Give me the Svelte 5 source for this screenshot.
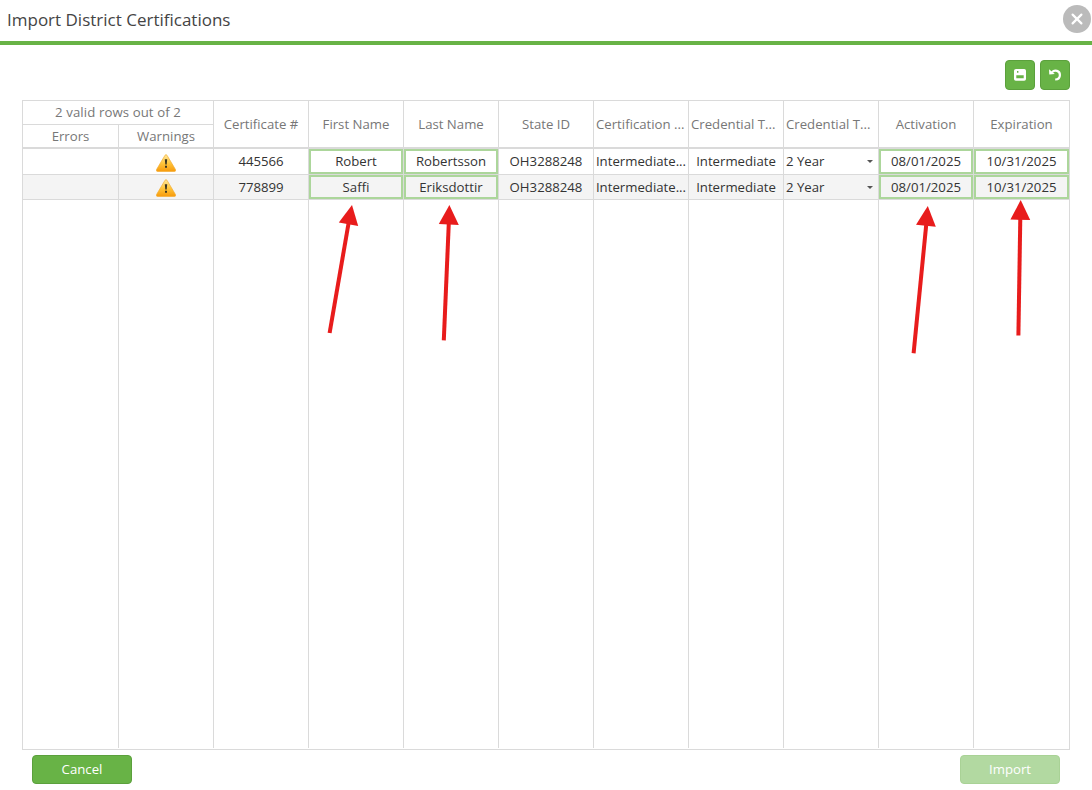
<script lang="ts">
	const columns = [
		'Certificate #',
		'First Name',
		'Last Name',
		'State ID',
		'Certification ...',
		'Credential T...',
		'Credential T...',
		'Activation',
		'Expiration'
	];

	const rows = [
		['445566', 'Robert', 'Robertsson', 'OH3288248', 'Intermediate...', 'Intermediate', '2 Year', '08/01/2025', '10/31/2025'],
		['778899', 'Saffi', 'Eriksdottir', 'OH3288248', 'Intermediate...', 'Intermediate', '2 Year', '08/01/2025', '10/31/2025']
	];

	const edited = [1, 2, 7, 8];
	const select = 6;

	// each arrow: tail, neck and the three corners of the head
	const arrows = [
		{ line: [329.6, 333, 348.6, 223], head: '352,205 338.8,222.5 358.2,226' },
		{ line: [443.8, 340.3, 448.8, 223], head: '449.4,205 438.8,224 458.8,225' },
		{ line: [913.6, 353.3, 926.2, 225], head: '927.8,206 916,224.8 935.8,226.8' },
		{ line: [1018.4, 335.5, 1020.3, 218], head: '1020.7,200 1010.4,219.6 1030.2,220' }
	];
</script>

<div class="dialog">
	<header>
		<h1>Import District Certifications</h1>
		<button class="close" aria-label="Close">
			<svg width="28" height="28" viewBox="0 0 28 28">
				<path d="M9.6 9.6l8.8 8.8M18.4 9.6l-8.8 8.8" stroke="#fff" stroke-width="2.2" stroke-linecap="round" />
			</svg>
		</button>
	</header>

	<div class="toolbar">
		<button class="tool" aria-label="Save">
			<svg width="28" height="28" viewBox="0 0 28 28">
				<path fill="#fff" fill-rule="evenodd" d="M10 8h8.2q1.8 0 1.8 1.8v8.2q0 1.8-1.8 1.8H9.8Q8 19.8 8 18V9.8Q8 8 10 8zM10.3 14.3v3h7.4v-3zM11 10v1.8h1.4v-1.8z" />
			</svg>
		</button>
		<button class="tool" aria-label="Undo">
			<svg width="28" height="28" viewBox="0 0 28 28">
				<path d="M11 11.2C13.6 8.4 18.9 9.6 18.9 14c0 2.7-1.9 4.5-4.7 4.5" fill="none" stroke="#fff" stroke-width="2.2" />
				<path d="M8 8.2l.3 5.3 5.5-.5z" fill="#fff" />
			</svg>
		</button>
	</div>

	<div class="grid">
		<div class="row head">
			<div class="group">
				<div class="summary">2 valid rows out of 2</div>
				<div class="pair">
					<div class="cell first">Errors</div>
					<div class="cell">Warnings</div>
				</div>
			</div>
			{#each columns as column}
				<div class="cell" class:cut={column.endsWith('...')}>{column}</div>
			{/each}
		</div>
		{#each rows as row, r}
			<div class="row data" class:alt={r % 2 == 1}>
				<div class="cell first"></div>
				<div class="cell">
					<svg class="warning" width="20" height="18" viewBox="0 0 20 18">
						<defs>
							<linearGradient id="amber{r}" x1="0" y1="0" x2="0" y2="1">
								<stop offset="0" stop-color="#ffe9a0" />
								<stop offset=".5" stop-color="#ffc63c" />
								<stop offset="1" stop-color="#f79a0c" />
							</linearGradient>
						</defs>
						<path d="M9 1.3Q10 -.1 11 1.3L19.5 15.6Q20 17.4 18.5 17.5H1.5Q0 17.4 .5 15.6z" fill="url(#amber{r})" stroke="#f4ae35" stroke-width=".7" />
						<path d="M8.8 5.2h2.4l-.5 5.3H9.3zM9 11.8h2v2H9z" fill="#3b3520" />
					</svg>
				</div>
				{#each row as value, i}
					<div class="cell" class:edited={edited.includes(i)} class:select={i == select}>
						<span>{value}</span>
						{#if i == select}<i class="caret"></i>{/if}
					</div>
				{/each}
			</div>
		{/each}
		<div class="row filler">
			<div class="cell first"></div>
			{#each Array(10) as _}
				<div class="cell"></div>
			{/each}
		</div>
	</div>

	<footer>
		<button class="action">Cancel</button>
		<button class="action" disabled>Import</button>
	</footer>

	<svg class="arrows" width="1092" height="790">
		{#each arrows as { line, head }}
			<line x1={line[0]} y1={line[1]} x2={line[2]} y2={line[3]} />
			<polygon points={head} />
		{/each}
	</svg>
</div>

<style>
	.dialog {
		position: relative;
		display: flex;
		flex-direction: column;
		width: 1092px;
		height: 790px;
		overflow: hidden;
		background: #fff;
		font-family: "Open Sans", "Noto Sans", sans-serif;
		font-size: 13.2px;
		color: #333;
	}
	header {
		display: flex;
		justify-content: space-between;
		box-sizing: border-box;
		height: 45px;
		padding: 5px 1px 0 7px;
		border-bottom: 4px solid #68b346;
	}
	h1 {
		margin: 0;
		font-size: 17px;
		font-weight: 400;
		line-height: 30px;
		color: #444;
		white-space: nowrap;
	}
	button {
		box-sizing: border-box;
		padding: 0;
		border: 0;
		font-family: inherit;
	}
	button svg {
		display: block;
	}
	.close {
		width: 28px;
		height: 28px;
		border-radius: 50%;
		background: #bbb;
	}
	.toolbar {
		display: flex;
		justify-content: flex-end;
		gap: 5px;
		padding: 15px 22px 10px 0;
	}
	.tool {
		width: 30px;
		height: 30px;
		border: 1px solid #5ba03c;
		border-radius: 4px;
		background: #68b346;
	}
	.grid {
		display: flex;
		flex-direction: column;
		box-sizing: border-box;
		width: 1048px;
		height: 650px;
		margin-left: 22px;
		padding-bottom: 1px;
		border: 1px solid #dadada;
	}
	.row {
		display: flex;
	}
	.head {
		height: 46px;
		border-bottom: 2px solid #dadada;
		color: #777;
	}
	.group {
		width: 191px;
	}
	.summary {
		height: 23px;
		border-right: 1px solid #dadada;
		border-bottom: 1px solid #dadada;
		line-height: 23px;
		text-align: center;
		letter-spacing: 0.1px;
	}
	.pair {
		display: flex;
		height: 22px;
	}
	.cell {
		display: flex;
		align-items: center;
		justify-content: center;
		box-sizing: border-box;
		width: 95px;
		border-right: 1px solid #dadada;
		white-space: nowrap;
	}
	.cell.first {
		width: 96px;
	}
	.cell.cut {
		justify-content: flex-start;
		padding-left: 2px;
	}
	.row > .cell:last-child {
		border-right: 0;
	}
	.data {
		height: 25px;
		border-bottom: 1px solid #dadada;
		line-height: 18px;
	}
	.data span {
		margin-bottom: 1px;
	}
	.data.alt {
		height: 24px;
		background: #f4f4f4;
	}
	.data.alt span {
		margin-bottom: 0;
	}
	.edited {
		position: relative;
	}
	.edited::after {
		content: "";
		position: absolute;
		inset: 0;
		border: 2px solid #acd69b;
	}
	.select {
		justify-content: space-between;
		padding: 0 5px 0 2px;
	}
	.caret {
		border: 3px solid transparent;
		border-top-color: #555;
		border-bottom: 0;
	}
	.warning {
		margin-top: 2px;
	}
	.data.alt .warning {
		margin-top: 1px;
	}
	.filler {
		flex: 1;
	}
	footer {
		display: flex;
		justify-content: space-between;
		padding: 5px 32px 0;
	}
	.action {
		width: 100px;
		height: 29px;
		padding-bottom: 2px;
		border: 1px solid #5ba03c;
		border-radius: 4px;
		background: #68b346;
		color: #fff;
		font-size: 13.2px;
	}
	.action:disabled {
		border-color: #a9d296;
		background: #b2d9a1;
	}
	.arrows {
		position: absolute;
		top: 0;
		left: 0;
		pointer-events: none;
	}
	.arrows line {
		stroke: #e81c1c;
		stroke-width: 4;
	}
	.arrows polygon {
		fill: #e81c1c;
	}
</style>
